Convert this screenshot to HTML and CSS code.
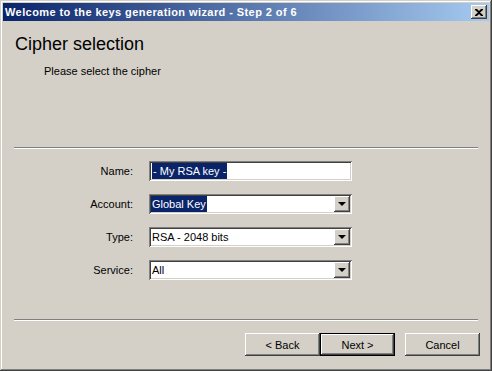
FILE: index.html
```html
<!DOCTYPE html>
<html lang="en">
<head>
    <meta charset="UTF-8">
    <title>Keys generation wizard</title>
    <link rel="stylesheet" href="styles.css">
</head>
<body>

<div class="window">

    <!-- Barre de titre -->
    <div class="titlebar">
        <span class="title">Welcome to the keys generation wizard - Step 2 of 6</span>
        <button class="close">
            <svg width="8" height="7" viewBox="0 0 8 7">
                <path d="M0 0h2l2 2 2-2h2v1L5 3.5 8 6v1H6L4 5 2 7H0V6l3-2.5L0 1z" fill="#000"/>
            </svg>
        </button>
    </div>

    <!-- En-tete de l'etape -->
    <div class="header">
        <h1 class="heading">Cipher selection</h1>
        <p class="subheading">Please select the cipher</p>
    </div>

    <div class="separator"></div>

    <!-- Formulaire -->
    <div class="form">
        <label class="label">Name:</label>
        <div class="field"><span class="selected">- My RSA key -</span></div>

        <label class="label">Account:</label>
        <div class="field combo"><span class="selected">Global Key</span><span class="arrow"></span></div>

        <label class="label">Type:</label>
        <div class="field combo"><span class="value">RSA - 2048 bits</span><span class="arrow"></span></div>

        <label class="label">Service:</label>
        <div class="field combo"><span class="value">All</span><span class="arrow"></span></div>
    </div>

    <div class="separator"></div>

    <!-- Boutons -->
    <div class="buttons">
        <button class="btn">&lt; Back</button>
        <button class="btn default">Next &gt;</button>
        <button class="btn cancel">Cancel</button>
    </div>

</div>

</body>
</html>
```

FILE: styles.css
```css
body {
    margin: 0;
    background: #d4d0c8;
    font-family: "Liberation Sans", Arial, sans-serif;
    font-size: 11px;
    color: #000;
}

.window {
    width: 492px;
    height: 371px;
    box-sizing: border-box;
    padding: 3px;
    background: #d4d0c8;
    display: flex;
    flex-direction: column;
    box-shadow: inset -1px -1px #404040, inset 1px 1px #d4d0c8,
                inset -2px -2px #808080, inset 2px 2px #fff;
}

/* Barre de titre */
.titlebar {
    height: 18px;
    display: flex;
    align-items: center;
    justify-content: space-between;
    padding: 0 2px 0 2px;
    background: linear-gradient(to right, #0a246a, #a6caf0);
}

.title {
    color: #fff;
    font-weight: bold;
    font-size: 11px;
    font-family: "Liberation Sans", Arial, sans-serif;
    letter-spacing: 0.42px;
}

.close {
    width: 16px;
    height: 14px;
    padding: 0;
    border: none;
    background: #d4d0c8;
    display: flex;
    align-items: center;
    justify-content: center;
    box-shadow: inset -1px -1px #404040, inset 1px 1px #fff,
                inset -2px -2px #808080;
}

/* En-tete */
.header {
    height: 126px;
    box-sizing: border-box;
    padding: 13px 0 0 12px;
}

.heading {
    margin: 0;
    font-size: 18px;
    font-weight: normal;
    line-height: 20px;
}

.subheading {
    margin: 11px 0 0 29px;
    font-size: 11px;
}

.separator {
    height: 0;
    margin: 0 11px;
    border-top: 1px solid #808080;
    border-bottom: 1px solid #fff;
}

/* Formulaire */
.form {
    flex: 1;
    display: grid;
    grid-template-columns: 130px 203px;
    column-gap: 16px;
    row-gap: 13px;
    align-content: start;
    padding-top: 12px;
}

.label {
    text-align: right;
    align-self: center;
}

.field {
    height: 20px;
    box-sizing: border-box;
    background: #fff;
    display: flex;
    align-items: center;
    padding: 2px 3px;
    box-shadow: inset 1px 1px #808080, inset -1px -1px #fff,
                inset 2px 2px #404040, inset -2px -2px #d4d0c8;
}

.combo {
    padding-right: 2px;
    justify-content: space-between;
}

.selected {
    background: #0a246a;
    color: #fff;
    padding: 1px 1px;
    line-height: 14px;
}

.combo .selected {
    margin-left: -1px;
}

.arrow {
    width: 16px;
    height: 16px;
    background: #d4d0c8;
    position: relative;
    box-shadow: inset -1px -1px #404040, inset 1px 1px #fff,
                inset -2px -2px #808080;
}

.arrow::after {
    content: "";
    position: absolute;
    left: 4px;
    top: 6px;
    border-left: 4px solid transparent;
    border-right: 4px solid transparent;
    border-top: 4px solid #000;
}

/* Boutons */
.buttons {
    height: 47px;
    box-sizing: border-box;
    display: flex;
    justify-content: flex-end;
    padding: 12px 9px 0 0;
}

.btn {
    width: 75px;
    height: 23px;
    border: none;
    background: #d4d0c8;
    font-family: "Liberation Sans", Arial, sans-serif;
    font-size: 11px;
    color: #000;
    box-shadow: inset -1px -1px #404040, inset 1px 1px #fff,
                inset -2px -2px #808080;
}

.default {
    margin-left: 0;
    box-shadow: inset 1px 1px #000, inset -1px -1px #000,
                inset -2px -2px #404040, inset 2px 2px #fff,
                inset -3px -3px #808080;
}

.cancel {
    margin-left: 10px;
}
```
